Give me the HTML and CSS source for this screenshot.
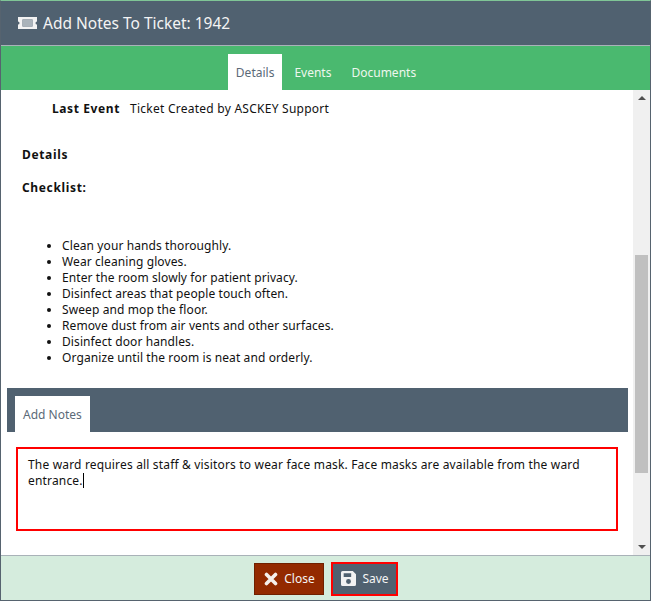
FILE: index.html
```html
<!DOCTYPE html>
<html lang="en">
<head>
<meta charset="utf-8">
<title>Add Notes To Ticket</title>
<link rel="stylesheet" href="styles.css">
</head>
<body>
<div class="dialog">
  <header class="title-bar">
    <svg class="ticket" width="19" height="12" viewBox="0 0 19 12"><path fill="#f2f2f2" fill-rule="evenodd" d="M0 0h19v4.500a1.500 1.500 0 0 0 0 3V12H0V7.500a1.500 1.500 0 0 0 0-3zM4.500 2.500v7h10v-7z"/><path fill="#aab3ba" d="M4.500 2.500h10v7h-10z"/></svg>
    <h1 class="title">Add Notes To Ticket: 1942</h1>
  </header>
  <nav class="tabs">
    <a class="tab tab-active">Details</a>
    <a class="tab">Events</a>
    <a class="tab">Documents</a>
  </nav>
  <div class="body">
    <main class="content">
      <div class="event-row"><b class="event-label">Last Event</b><span class="event-value">Ticket Created by ASCKEY Support</span></div>
      <p class="heading heading-details">Details</p>
      <p class="heading heading-checklist">Checklist:</p>
      <ul class="checklist">
        <li>Clean your hands thoroughly.</li>
        <li>Wear cleaning gloves.</li>
        <li>Enter the room slowly for patient privacy.</li>
        <li>Disinfect areas that people touch often.</li>
        <li>Sweep and mop the floor.</li>
        <li>Remove dust from air vents and other surfaces.</li>
        <li>Disinfect door handles.</li>
        <li>Organize until the room is neat and orderly.</li>
      </ul>
      <div class="notes-bar"><span class="notes-tab">Add Notes</span></div>
      <div class="notes-box">The ward requires all staff &amp; visitors to wear face mask. Face masks are available from the ward entrance.<span class="caret"></span></div>
    </main>
    <div class="scrollbar">
      <div class="arrow arrow-up"></div>
      <div class="track"><div class="thumb"></div></div>
      <div class="arrow arrow-down"></div>
    </div>
  </div>
  <footer class="footer">
    <button class="btn btn-close">
      <svg width="14" height="14" viewBox="0 0 14 14"><path fill="none" stroke="#f5f0ec" stroke-width="3.600" stroke-linecap="round" d="M2.500 2.500l9 9M11.500 2.500l-9 9"/></svg>
      <span>Close</span>
    </button>
    <button class="btn btn-save">
      <svg width="15" height="15" viewBox="0 0 14 14"><path fill="#f2f2f2" fill-rule="evenodd" d="M1.500 0H11l3 3v9.500a1.500 1.500 0 0 1-1.500 1.500h-11A1.500 1.500 0 0 1 0 12.500v-11A1.500 1.500 0 0 1 1.500 0zM2.500 2v3.500h7V2zM7 7.500a2.300 2.300 0 1 0 0 4.600a2.300 2.300 0 0 0 0-4.600z"/></svg>
      <span>Save</span>
    </button>
  </footer>
</div>
</body>
</html>
```
FILE: styles.css
```css
* { box-sizing: border-box; }
html, body { margin: 0; padding: 0; background: #fff; }
body {
  font-family: "Noto Sans", "DejaVu Sans", sans-serif;
  font-size: 12px;
  color: #111;
}
.dialog {
  width: 651px;
  height: 601px;
  display: flex;
  flex-direction: column;
  border: 1px solid #56636f;
  border-top-color: #7fc596;
}
.title-bar {
  height: 45px;
  flex: none;
  display: flex;
  align-items: center;
  gap: 6px;
  padding-left: 17px;
  background: #506170;
  border-bottom: 1px solid #a9b2b8;
}
.ticket { flex: none; }
.title {
  margin: 0;
  font-size: 15.5px;
  font-weight: 400;
  color: #f4f4f4;
}
.tabs {
  height: 44px;
  flex: none;
  display: flex;
  justify-content: center;
  align-items: flex-end;
  gap: 4px;
  padding-left: 1px;
  background: #4ab96f;
}
.tab {
  height: 36px;
  padding: 0 8px;
  line-height: 37px;
  color: #eef7ee;
}
.tab-active {
  background: #fff;
  color: #5b6a78;
}
.body {
  height: 465px;
  flex: none;
  display: flex;
  background: #fff;
}
.content {
  flex: 1;
  min-width: 0;
  padding: 0 5px 0 6px;
}
.event-row {
  display: flex;
  padding: 11px 0 0 45px;
  line-height: 16px;
  gap: 10px;
}
.event-label { color: #111; letter-spacing: .6px; }
.event-value { letter-spacing: .25px; }
.heading {
  margin: 0;
  font-weight: 700;
  padding-left: 15px;
  line-height: 16px;
  letter-spacing: .65px;
}
.heading-details { margin-top: 30px; }
.heading-checklist { margin-top: 17px; }
.checklist {
  margin: 42px 0 0;
  padding: 0 0 0 55px;
  line-height: 16px;
  letter-spacing: .1px;
}
.notes-bar {
  margin-top: 22px;
  height: 44px;
  background: #506170;
  display: flex;
  align-items: flex-end;
  padding-left: 8px;
}
.notes-tab {
  height: 36px;
  padding: 0 8px;
  line-height: 37px;
  background: #fff;
  color: #5b6a78;
}
.notes-box {
  margin: 15px 10px 0 9px;
  height: 84px;
  border: 2px solid #f00;
  padding: 8px 10px;
  line-height: 16px;
  letter-spacing: .17px;
}
.caret {
  display: inline-block;
  width: 1px;
  height: 15px;
  background: #000;
  vertical-align: -3px;
}
.scrollbar {
  width: 17px;
  flex: none;
  display: flex;
  flex-direction: column;
  background: #f0f0f0;
}
.arrow { height: 17px; flex: none; position: relative; }
.arrow-up::after, .arrow-down::after {
  content: "";
  position: absolute;
  left: 5px;
  width: 0;
  height: 0;
  border-left: 4px solid transparent;
  border-right: 4px solid transparent;
}
.arrow-up::after { top: 6px; border-bottom: 4px solid #505050; }
.arrow-down::after { top: 7px; border-top: 4px solid #505050; }
.track { flex: 1; padding-left: 2px; }
.thumb {
  width: 13px;
  height: 218px;
  margin-top: 148px;
  background: #c0c0c0;
}
.footer {
  height: 45px;
  flex: none;
  display: flex;
  justify-content: center;
  align-items: center;
  gap: 7px;
  padding-top: 1px;
  background: #d5ecdd;
  border-top: 1px solid #a9b2b8;
}
.btn {
  display: flex;
  align-items: center;
  justify-content: center;
  gap: 6px;
  height: 32px;
  font: inherit;
  padding: 0 0 0 2px;
  color: #f5f5f5;
  cursor: pointer;
}
.btn-close {
  background: #932a00;
  border: 1px solid #6f2000;
  width: 70px;
}
.btn-save {
  background: #506170;
  border: 2px solid #f00;
  width: 67px;
  height: 34px;
}
```
